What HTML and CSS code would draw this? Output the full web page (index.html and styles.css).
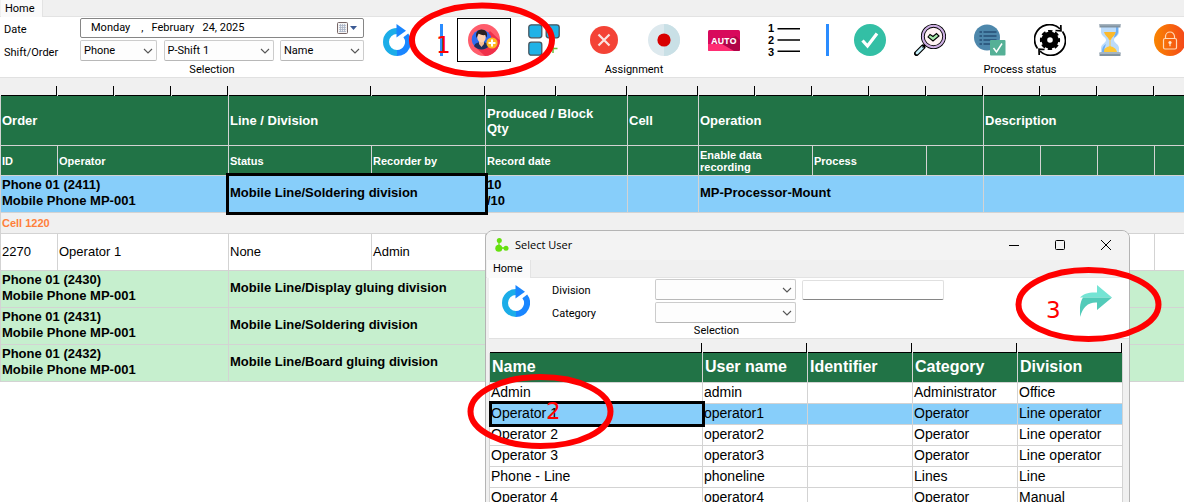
FILE: index.html
```html
<!DOCTYPE html>
<html lang="en">
<head>
<meta charset="utf-8">
<title>Production orders</title>
<link rel="stylesheet" href="styles.css">
</head>
<body>
<svg class="defs" aria-hidden="true">
  <symbol id="chevron" viewBox="0 0 10 10"><path d="M1 3l4 4 4-4" fill="none" stroke="#555" stroke-width="1.1"/></symbol>
  <symbol id="refresh" viewBox="0 0 28 32">
    <path d="M14 7A11 11 0 0 0 14 29" fill="none" stroke="#1cade8" stroke-width="6"/>
    <path d="M22.8 11.400A11 11 0 0 1 14 29" fill="none" stroke="#1a86ff" stroke-width="6"/>
    <path d="M13.500 0L23 6.800 13.500 13.500z" fill="#1a86ff"/>
  </symbol>
</svg>
<div class="desktop">
  <main class="app">
    <nav class="tabs"><button class="tab" type="button">Home</button></nav>
    <div class="ribbon">
      <section class="group group-selection">
        <div class="group-body">
          <div class="fields">
            <label for="date">Date</label>
            <div class="date-box">
              <input id="date" type="text" value="Monday&nbsp;&nbsp;&nbsp;&nbsp;,&nbsp;&nbsp;&nbsp;February&nbsp;&nbsp;&nbsp;24, 2025">
              <button class="date-button" type="button" aria-label="Open calendar">
                <svg width="22" height="14" viewBox="0 0 22 14"><rect x="1.500" y="1.500" width="10" height="11" rx="1" fill="#f4f4f4" stroke="#766"/><path d="M3 4.500h7M3 6.500h7M3 8.500h7M3 10.500h7M4.500 3v8M6.500 3v8M8.500 3v8" stroke="#aab4c6" stroke-width=".8"/><path d="M14 5h7l-3.500 4z" fill="#3b5a94"/></svg>
              </button>
            </div>
            <label for="shift">Shift/Order</label>
            <div class="selects">
              <span class="select select-product"><select id="shift"><option>Phone</option></select><svg class="chevron"><use href="#chevron"/></svg></span>
              <span class="select select-shift"><select aria-label="Shift"><option>P-Shift 1</option></select><svg class="chevron"><use href="#chevron"/></svg></span>
              <span class="select select-sort"><select aria-label="Sort by"><option>Name</option></select><svg class="chevron"><use href="#chevron"/></svg></span>
            </div>
          </div>
          <button class="refresh" type="button" aria-label="Refresh"><svg width="28" height="32"><use href="#refresh"/></svg></button>
        </div>
        <h2 class="group-title">Selection</h2>
      </section>
      <span class="divider"></span>
      <section class="group">
        <div class="group-body">
          <button class="tool tool-active" type="button" aria-label="Assign user">
            <svg width="32" height="32" viewBox="0 0 32 32"><circle cx="16" cy="16" r="16" fill="#ff5d6c"/><path d="M22 7l10 9.500A16 16 0 0 1 17 32L6 22z" fill="#f0304a"/><circle cx="13.500" cy="15.500" r="9.800" fill="#2e6cf0"/><path d="M6 22c1-3 4-4 7.500-4s6.500 1 7.500 4a9.800 9.800 0 0 1-15 0z" fill="#1e2f5c"/><path d="M11 16h5v4l-2.500 3-2.500-3z" fill="#f4b990"/><ellipse cx="13.500" cy="13.500" rx="4.200" ry="5" fill="#ffd0ae"/><path d="M8.500 14c-1.500-5 1-8.500 5-8.500s7 3 5 8.500l-1-3c-3 .5-6-.5-7-1.500z" fill="#2b2223"/><circle cx="24" cy="19" r="5.600" fill="#ffb820"/><path d="M24 15.500v7M20.500 19h7" stroke="#fff" stroke-width="2"/></svg>
          </button>
          <button class="tool" type="button" aria-label="Add block">
            <svg width="32" height="32" viewBox="0 0 32 32"><g fill="#1fb2e7" stroke="#46555f" stroke-width="1.300"><rect x=".8" y=".8" width="13" height="13" rx="2.500"/><rect x="18.200" y=".8" width="13" height="13" rx="2.500"/><rect x=".8" y="18.200" width="13" height="13" rx="2.500"/></g><path d="M25 20v9M20.500 24.500h9" stroke="#6abf3a" stroke-width="1.500"/></svg>
          </button>
          <button class="tool" type="button" aria-label="Cancel">
            <svg width="32" height="32" viewBox="0 0 32 32"><circle cx="16" cy="16" r="14" fill="#f44336"/><path d="M10.500 10.500l11 11M21.500 10.500l-11 11" stroke="#fbe3e1" stroke-width="2.200"/></svg>
          </button>
          <button class="tool" type="button" aria-label="Record">
            <svg width="32" height="32" viewBox="0 0 32 32"><circle cx="16" cy="16" r="16" fill="#dde9ee"/><path d="M16 0a16 16 0 0 1 0 32z" fill="#c9e0e6"/><circle cx="16" cy="16" r="6.600" fill="#d80000"/></svg>
          </button>
          <button class="tool" type="button" aria-label="Auto">
            <svg width="32" height="32" viewBox="0 0 32 32"><rect y="6" width="32" height="21" rx="1.500" fill="#d8095c"/><path d="M28 12l4 4v9.500a1.500 1.500 0 0 1-1.500 1.500H20L5 20z" fill="#b00448"/><path d="M0 20h14l12 7H1.500A1.500 1.500 0 0 1 0 25.500z" fill="#ff2d73"/><text x="16" y="20" text-anchor="middle" class="auto-text">AUTO</text></svg>
          </button>
          <button class="tool" type="button" aria-label="Sequence">
            <svg class="list-icon" width="32" height="32" viewBox="0 0 32 32"><path d="M9.500 4.700H32M9.500 16H32M9.500 27.300H32" stroke="#000" stroke-width="1.500"/><g class="list-digit"><text x="0" y="8">1</text><text x="0" y="20">2</text><text x="0" y="32">3</text></g></svg>
          </button>
        </div>
        <h2 class="group-title">Assignment</h2>
      </section>
      <span class="divider"></span>
      <section class="group">
        <div class="group-body">
          <button class="tool" type="button" aria-label="Complete">
            <svg width="32" height="32" viewBox="0 0 32 32"><circle cx="16" cy="16" r="16" fill="#33bfa5"/><path d="M8.500 16.500l5 5.500L23 9.500" fill="none" stroke="#fff" stroke-width="3.200"/></svg>
          </button>
          <button class="tool" type="button" aria-label="Inspect">
            <svg width="32" height="32" viewBox="0 0 32 32"><path d="M2.500 29.500L9 23" stroke="#000" stroke-width="5" stroke-linecap="round"/><path d="M3 29L8.500 23.500" stroke="#c5f0fa" stroke-width="2.800" stroke-linecap="round"/><path d="M8.500 23.500l3.500-3.500" stroke="#000" stroke-width="1.500"/><circle cx="19.500" cy="12.500" r="10.700" fill="#fff3f3" stroke="#000" stroke-width="3.800"/><circle cx="19.500" cy="12.500" r="10.700" fill="none" stroke="#ceb0e4" stroke-width="2"/><path d="M14 13l2-2.500 3 2 3.500-3 2.500 2.500-6 5z" fill="#a8eaaa" stroke="#000" stroke-width="1.100"/></svg>
          </button>
          <button class="tool" type="button" aria-label="Check list">
            <svg width="32" height="32" viewBox="0 0 32 32"><circle cx="13" cy="13.500" r="13" fill="#4d87ab"/><path d="M9.500 8h13M9.500 12h13M9.500 16h13M9.500 20h7M5.500 8H8M5.500 12H8M5.500 16H8M5.500 20H8" stroke="#264f75" stroke-width="1.500"/><rect x="16" y="16" width="15.500" height="15.500" rx="1" fill="#55b096"/><path d="M19.500 24l3 4 5.500-8.500" fill="none" stroke="#fff" stroke-width="1.500"/></svg>
          </button>
          <button class="tool" type="button" aria-label="Process">
            <svg width="32" height="32" viewBox="0 0 32 32"><g fill="none" stroke="#000" stroke-width="1.700"><path d="M3.500 24.500A15 15 0 0 1 26 4.800M28.500 7.500A15 15 0 0 1 6 27.200"/><path d="M21.500 6.500L27 6.800 26.800 1M10.500 25.500L5 25.200 5.200 31"/></g><circle cx="16" cy="16" r="5.700" fill="none" stroke="#000" stroke-width="5.800"/><circle cx="16" cy="16" r="8.800" fill="none" stroke="#000" stroke-width="2.600" stroke-dasharray="4.200 2.711" stroke-dashoffset="2.100"/></svg>
          </button>
          <button class="tool" type="button" aria-label="Waiting">
            <svg width="32" height="32" viewBox="0 0 32 32"><path d="M7 3h18v5c0 4-5 5-5 8s5 4 5 8v5H7v-5c0-4 5-5 5-8s-5-4-5-8z" fill="#bcdcfc"/><path d="M10 8h12c-1 4-4.500 5-5 8h-2c-.5-3-4-4-5-8z" fill="#fbb92e"/><path d="M15.500 15h1v9h-1z" fill="#ffca42"/><path d="M9 28c1-4 4-5 7-6 3 1 6 2 7 6z" fill="#ffc633"/><path d="M22 3h2v5c0 3-3 5-4 6 0-3 2-5 2-7zM8 28c0-4 1-6 4-8-1 3-2 5-2 8z" fill="#6caef4"/><path d="M5.500 0h21v3.500h-21zM5.500 28.500h21V32h-21z" fill="#8193a1"/><path d="M5.500 0h21v1.500h-21zM5.500 28.500h21V30h-21z" fill="#a6b4bf"/></svg>
          </button>
          <button class="tool" type="button" aria-label="Lock">
            <svg width="32" height="32" viewBox="0 0 32 32"><defs><linearGradient id="lock-fill"><stop stop-color="#f98500"/><stop offset="1" stop-color="#f4461a"/></linearGradient></defs><circle cx="16" cy="16" r="16" fill="url(#lock-fill)"/><g fill="none" stroke="#ffd9b8" stroke-width="1.200"><rect x="9.500" y="14.500" width="13" height="10.500" rx="1.500"/><path d="M11.500 14.500v-2a4.500 4.500 0 0 1 9 0v2"/></g><circle cx="16" cy="18.500" r="1.600" fill="#ffe6cf"/><path d="M15.400 19h1.200v3.200h-1.200z" fill="#ffe6cf"/></svg>
          </button>
        </div>
        <h2 class="group-title">Process status</h2>
      </section>
    </div>
    <table class="grid orders">
      <colgroup>
        <col class="c58"><col class="c57" span="3"><col class="c143"><col class="c114"><col class="c71" span="3"><col class="c57" span="8"><col>
      </colgroup>
      <thead>
        <tr class="ruler"><td></td><td></td><td></td><td></td><td></td><td></td><td></td><td></td><td></td><td></td><td></td><td></td><td></td><td></td><td></td><td></td><td></td><td class="open"></td></tr>
        <tr class="head"><th colspan="4">Order</th><th colspan="2">Line / Division</th><th colspan="2">Produced / Block Qty</th><th>Cell</th><th colspan="5">Operation</th><th colspan="4">Description</th></tr>
        <tr class="subhead"><th>ID</th><th colspan="3">Operator</th><th>Status</th><th>Recorder by</th><th colspan="2">Record date</th><th></th><th colspan="2">Enable data recording</th><th colspan="2">Process</th><th></th><th></th><th></th><th></th><th></th></tr>
      </thead>
      <tbody>
        <tr class="order current"><td colspan="4">Phone 01 (2411)<br>Mobile Phone MP-001</td><td colspan="2" class="picked">Mobile Line/Soldering division</td><td colspan="2">10<br>/10</td><td></td><td colspan="5">MP-Processor-Mount</td><td colspan="4"></td></tr>
        <tr class="cell-row"><td colspan="18">Cell 1220</td></tr>
        <tr class="operator"><td>2270</td><td colspan="3">Operator 1</td><td>None</td><td>Admin</td><td colspan="2"></td><td></td><td colspan="2"></td><td colspan="2"></td><td></td><td></td><td></td><td></td><td></td></tr>
        <tr class="order"><td colspan="4">Phone 01 (2430)<br>Mobile Phone MP-001</td><td colspan="2">Mobile Line/Display gluing division</td><td colspan="2"></td><td></td><td colspan="5"></td><td colspan="4"></td></tr>
        <tr class="order"><td colspan="4">Phone 01 (2431)<br>Mobile Phone MP-001</td><td colspan="2">Mobile Line/Soldering division</td><td colspan="2"></td><td></td><td colspan="5"></td><td colspan="4"></td></tr>
        <tr class="order"><td colspan="4">Phone 01 (2432)<br>Mobile Phone MP-001</td><td colspan="2">Mobile Line/Board gluing division</td><td colspan="2"></td><td></td><td colspan="5"></td><td colspan="4"></td></tr>
      </tbody>
    </table>
  </main>

  <section class="dialog" role="dialog" aria-labelledby="dialog-title">
    <header class="titlebar">
      <svg width="14" height="14" viewBox="0 0 14 14"><path d="M4 2.500V10h7" fill="none" stroke="#66e00f" stroke-width="1.300"/><g fill="#66e00f"><circle cx="4.300" cy="2.500" r="2.500"/><circle cx="3.800" cy="10.300" r="3.500"/><circle cx="11" cy="10.300" r="2.500"/></g></svg>
      <h1 class="dialog-title" id="dialog-title">Select User</h1>
      <button class="caption" type="button" aria-label="Minimize"><svg width="12" height="12" viewBox="0 0 12 12"><path d="M1 6.500h10" stroke="#000"/></svg></button>
      <button class="caption" type="button" aria-label="Maximize"><svg width="12" height="12" viewBox="0 0 12 12"><rect x="1.500" y="1.500" width="9" height="9" rx="1" fill="none" stroke="#000"/></svg></button>
      <button class="caption" type="button" aria-label="Close"><svg width="12" height="12" viewBox="0 0 12 12"><path d="M1 1l10 10M11 1L1 11" stroke="#000"/></svg></button>
    </header>
    <nav class="tabs"><button class="tab" type="button">Home</button></nav>
    <div class="ribbon dialog-ribbon">
      <section class="group">
        <div class="group-body">
          <button class="refresh" type="button" aria-label="Refresh users"><svg width="28" height="32"><use href="#refresh"/></svg></button>
          <div class="filters">
            <label for="division">Division</label>
            <span class="select"><select id="division"><option></option></select><svg class="chevron"><use href="#chevron"/></svg></span>
            <input class="search" type="text" aria-label="Search">
            <label for="category">Category</label>
            <span class="select"><select id="category"><option></option></select><svg class="chevron"><use href="#chevron"/></svg></span>
          </div>
        </div>
        <h2 class="group-title">Selection</h2>
      </section>
      <button class="apply" type="button" aria-label="Apply">
        <svg width="32" height="32" viewBox="0 0 32 32"><path d="M17 0l15 12.500H0C3 9 9 7 17 7.500z" fill="#74e4d4"/><path d="M32 12.500L17 25v-7.500C8 17 3 22 0 32c-.5-9 0-15 3-19.500z" fill="#52cbb9"/></svg>
      </button>
    </div>
    <table class="grid users">
      <colgroup><col><col class="c105" span="4"></colgroup>
      <thead>
        <tr class="ruler"><td></td><td></td><td></td><td></td><td></td></tr>
        <tr class="head"><th>Name</th><th>User name</th><th>Identifier</th><th>Category</th><th>Division</th></tr>
      </thead>
      <tbody>
        <tr><td>Admin</td><td>admin</td><td></td><td>Administrator</td><td>Office</td></tr>
        <tr class="current"><td class="picked">Operator 1</td><td>operator1</td><td></td><td>Operator</td><td>Line operator</td></tr>
        <tr><td>Operator 2</td><td>operator2</td><td></td><td>Operator</td><td>Line operator</td></tr>
        <tr><td>Operator 3</td><td>operator3</td><td></td><td>Operator</td><td>Line operator</td></tr>
        <tr><td>Phone - Line</td><td>phoneline</td><td></td><td>Lines</td><td>Line</td></tr>
        <tr><td>Operator 4</td><td>operator4</td><td></td><td>Operator</td><td>Manual</td></tr>
      </tbody>
    </table>
  </section>

  <svg class="marks" aria-hidden="true">
    <g class="ring"><ellipse cx="482" cy="40" rx="70" ry="34.500"/><ellipse cx="540.500" cy="411.500" rx="70" ry="34.500"/><ellipse cx="1088.500" cy="304.500" rx="70" ry="34.500"/></g>
    <g class="mark"><text x="436" y="53">1</text><text x="546" y="419">2</text><text x="1046" y="318">3</text></g>
  </svg>
</div>
</body>
</html>
```

FILE: styles.css
```css
* { box-sizing: border-box; }

body {
  margin: 0;
  background: #fff;
  color: #000;
  font-family: "Liberation Sans", Arial, sans-serif;
  font-size: 13px;
}

button, input, select {
  margin: 0;
  padding: 0;
  border: 0;
  background: none;
  color: inherit;
  font: inherit;
}

.defs { position: absolute; width: 0; height: 0; }

.desktop {
  position: relative;
  height: 100vh;
  overflow: hidden;
}

/* Tabs */
.tabs {
  display: flex;
  height: 17px;
  padding-left: 1px;
  background: #f0f0f0;
  border-bottom: 1px solid #e3e3e3;
}

.tab {
  height: 17px;
  padding: 0 7px 0 4px;
  background: #fafafa;
  border-right: 1px solid #e3e3e3;
  font: 11px/16px Roboto, sans-serif;
}

/* Ribbon */
.ribbon {
  display: flex;
  height: 61px;
  padding-top: 1px;
  background: #fff;
  border-bottom: 1px solid #e1e1e1;
  font: 11px/14px Roboto, sans-serif;
}

.group { display: flex; flex-direction: column; flex: none; }
.group-selection { width: 428px; padding: 0 8px 0 4px; }
.group-body { display: flex; height: 44px; }
.group-title { margin: 0; font: inherit; line-height: 15px; text-align: center; }

.fields {
  display: grid;
  grid-template: 20px 21px / 76px 284px;
  row-gap: 2px;
  align-items: center;
}

.fields label { padding-top: 4px; }

.date-box {
  display: flex;
  align-items: center;
  height: 20px;
  padding: 0 5px 0 10px;
  border: 1px solid #868686;
  border-radius: 2px;
}

.date-box input { flex: 1; min-width: 0; }
.date-button { display: flex; }

.selects { display: flex; justify-content: space-between; }
.select { display: grid; align-items: center; height: 21px; }
.select-product { width: 77px; }
.select-shift { width: 110px; }
.select-sort { width: 84px; }

.select select {
  grid-area: 1 / 1;
  width: 100%;
  height: 21px;
  padding-left: 3px;
  appearance: none;
  background: #fdfdfd;
  border: 1px solid #ccc;
  border-bottom-color: #b8b8b8;
  border-radius: 2px;
}

.chevron {
  grid-area: 1 / 1;
  justify-self: end;
  width: 10px;
  height: 10px;
  margin-right: 4px;
  pointer-events: none;
}

.refresh { display: flex; flex: none; margin: 6px 0 0 19px; }

.divider { display: flex; flex: none; justify-content: center; width: 26px; height: 38px; padding-top: 6px; }
.divider::before { content: ""; width: 3px; background: #2a8cff; }

.tool {
  display: flex;
  align-items: center;
  justify-content: center;
  width: 54px;
  height: 44px;
  margin: 0 3px;
}

.tool-active { border: 1px solid #000; }
.auto-text { fill: #fff; font: bold 9px "Open Sans", sans-serif; }
.list-icon { overflow: visible; }
.list-digit { font: bold 11px "Liberation Sans", sans-serif; }

/* Tables */
.grid {
  width: 100%;
  table-layout: fixed;
  border-collapse: separate;
  border-spacing: 0;
}

.grid td, .grid th {
  padding: 0 0 0 1px;
  border-right: 1px solid #d3d3d3;
  border-bottom: 1px solid #d3d3d3;
  text-align: left;
  vertical-align: middle;
}

.grid tbody td { padding-bottom: 2px; }
.grid td:first-child, .grid th:first-child { border-left: 1px solid #d3d3d3; }

.grid .ruler td {
  height: 18px;
  border-color: #f0f0f0;
  border-bottom: 0;
  background:
    linear-gradient(#000, #000) right bottom / 1px 10px no-repeat,
    linear-gradient(#000, #000) left bottom / 100% 1px no-repeat,
    #f0f0f0;
}

.grid .ruler .open { background: linear-gradient(#000, #000) left bottom / 100% 1px no-repeat, #f0f0f0; }

.grid th { background: #217346; color: #fff; }
.grid .current td { background: #87cefa; }

.picked { position: relative; }
.picked::after {
  content: "";
  position: absolute;
  inset: -3px;
  border: 3px solid #000;
}

.c57 { width: 57px; }
.c58 { width: 58px; }
.c71 { width: 71px; }
.c105 { width: 105px; }
.c114 { width: 114px; }
.c143 { width: 143px; }

.orders tr > :last-child { border-right: 0; }
.orders .head th { height: 50px; padding-right: 16px; line-height: 15px; }
.orders .subhead th { height: 30px; font-size: 11px; line-height: 12px; }
.orders .order td { height: 37px; background: #c6efce; font-weight: bold; line-height: 16px; }
.orders .current td { background: #87cefa; }
.orders .cell-row td { height: 21px; padding-bottom: 0; background: #f0f0f0; color: #ff7f3a; font-size: 11px; font-weight: bold; }
.orders .operator td { height: 37px; }

/* Dialog window */
.dialog {
  position: absolute;
  top: 230px;
  right: 54px;
  bottom: -20px;
  left: 485px;
  overflow: hidden;
  background: #f0f0f0;
  border: 1px solid #b4b4b4;
  border-radius: 8px;
}

.titlebar { display: flex; align-items: center; height: 29px; padding: 0 0 2px 9px; background: #f3f3f3; }
.dialog-title { flex: 1; margin: 0; padding-left: 6px; font: 11px "Open Sans", sans-serif; }
.caption { display: flex; align-items: center; justify-content: center; width: 46px; height: 27px; }

.dialog .tabs { height: 18px; }
.dialog .tab { height: 18px; padding: 0 7px 0 6px; line-height: 18px; }
.dialog-ribbon { justify-content: space-between; margin-left: 3px; }

.filters {
  display: grid;
  grid-template: 21px 21px / 103px 141px 148px;
  gap: 2px 0;
  align-items: center;
  margin-left: 22px;
}

.filters label { padding-top: 2px; }
.filters .select { width: 141px; }

.search {
  width: 142px;
  height: 20px;
  margin-left: 6px;
  background: #fff;
  border: 1px solid #e0e0e0;
  border-bottom-color: #868686;
  border-radius: 2px;
}

.dialog-ribbon .refresh { margin-left: 13px; }
.apply { display: flex; margin: 6px 17px 0 0; }

.users { width: calc(100% - 9px); margin-left: 3px; background: #fff; font-size: 14px; }
.users .ruler td { height: 14px; }
.users .head th { height: 30px; padding: 0 0 2px 2px; font-size: 16px; }
.users tbody td { height: 21px; line-height: 16px; }
.users .picked::after { left: -1px; }

/* Step marks */
.marks {
  position: absolute;
  inset: 0;
  width: 100%;
  height: 100%;
  pointer-events: none;
}

.ring { fill: none; stroke: #f00; stroke-width: 6px; }
.mark { fill: #f00; font: 23px "DejaVu Sans", sans-serif; }
```
